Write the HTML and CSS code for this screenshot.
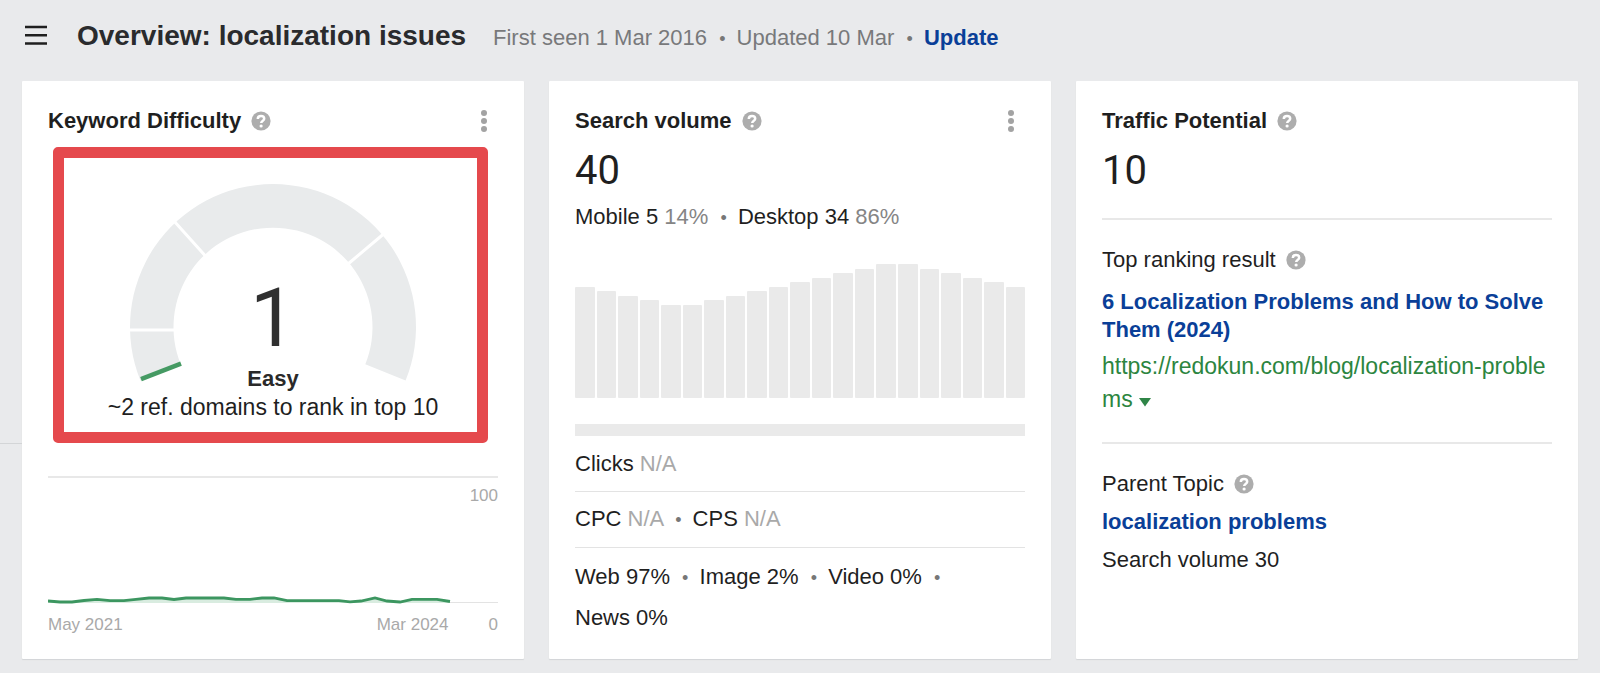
FILE: index.html
```html
<!DOCTYPE html>
<html lang="en">
<head>
<meta charset="utf-8">
<meta name="viewport" content="width=device-width, initial-scale=1">
<title>Overview: localization issues</title>
<link rel="stylesheet" href="styles.css">
</head>
<body>
<svg class="defs" aria-hidden="true">
  <symbol id="help" viewBox="0 0 20 20">
    <circle cx="10" cy="10" r="9.6" fill="#adadad"/>
    <path d="M6.800 7.900C6.800 6 8.200 5 10 5s3.200 1 3.200 2.700c0 2-3 2-3 4.400" fill="none" stroke="#fff" stroke-width="2.500"/>
    <circle cx="10.100" cy="15" r="1.600" fill="#fff"/>
  </symbol>
  <symbol id="kebab" viewBox="0 0 6 24">
    <g fill="#a3a3a3"><circle cx="3" cy="4" r="3"/><circle cx="3" cy="12" r="3"/><circle cx="3" cy="20" r="3"/></g>
  </symbol>
</svg>

<header class="topbar">
  <button class="icon-button" type="button" aria-label="Menu">
    <svg class="menu-icon" viewBox="0 0 22 20"><path d="M0 2h22M0 10.300h22M0 18.500h22" stroke="#1f1f1f" stroke-width="2.600"/></svg>
  </button>
  <h1 class="page-title">Overview: localization issues</h1>
  <p class="meta">First seen 1 Mar 2016 <span class="dot">•</span> Updated 10 Mar <span class="dot">•</span> <a class="link" href="#">Update</a></p>
</header>

<main class="cards">
  <section class="card">
    <div class="card-head">
      <h2 class="card-title">Keyword Difficulty</h2>
      <svg class="help"><use href="#help"/></svg>
      <button class="icon-button more" type="button" aria-label="More options"><svg class="kebab"><use href="#kebab"/></svg></button>
    </div>
    <div class="highlight">
      <div class="gauge">
        <svg class="gauge-arc" viewBox="0 0 286 200">
          <path d="M10.400 196.600A143 143 0 1 1 275.600 196.600L235.300 180.300A99.500 99.500 0 1 0 50.700 180.300Z" fill="#e9ebec"/>
          <path d="M-2 146H46M44 37L75 71.500M253 50.500L218 80" stroke="#fff" stroke-width="3" fill="none"/>
          <path d="M11 195.200L51 179.600" stroke="#459a63" stroke-width="4.500"/>
        </svg>
        <span class="gauge-value">1</span>
      </div>
      <strong class="gauge-label">Easy</strong>
      <span class="gauge-note">~2 ref. domains to rank in top 10</span>
    </div>
    <div class="history">
      <span class="axis-top">100</span>
      <svg class="history-chart" viewBox="0 0 450 14" preserveAspectRatio="none">
        <path d="M0 10.500H450" stroke="#e3e3e3"/>
        <path d="M0 9L12 10H24L36 8.500 49 7.300 62 8.700H76L88 7.300 101 6H114L126 7.500 138 6H176L188 7.300H202L214 6H226L239 8.700H291L302 9.800 313 9 327 6 339 9 352 10 364 7.300H389L402 9.500V11H0Z" fill="#d9ece0"/>
        <path d="M0 9L12 10H24L36 8.500 49 7.300 62 8.700H76L88 7.300 101 6H114L126 7.500 138 6H176L188 7.300H202L214 6H226L239 8.700H291L302 9.800 313 9 327 6 339 9 352 10 364 7.300H389L402 9.500" fill="none" stroke="#3c9660" stroke-width="2.800"/>
      </svg>
      <div class="axis-bottom"><span>May 2021</span><span class="axis-end">Mar 2024</span><span>0</span></div>
    </div>
  </section>

  <section class="card">
    <div class="card-head">
      <h2 class="card-title">Search volume</h2>
      <svg class="help"><use href="#help"/></svg>
      <button class="icon-button more" type="button" aria-label="More options"><svg class="kebab"><use href="#kebab"/></svg></button>
    </div>
    <p class="figure">40</p>
    <p>Mobile 5 <span class="share">14%</span> <span class="dot">•</span> Desktop 34 <span class="share">86%</span></p>
    <div class="bars">
      <i style="height:111px"></i><i style="height:107px"></i><i style="height:102px"></i><i style="height:98px"></i><i style="height:93px"></i><i style="height:93px"></i><i style="height:98px"></i><i style="height:102px"></i><i style="height:107px"></i><i style="height:111px"></i><i style="height:116px"></i><i style="height:120px"></i><i style="height:125px"></i><i style="height:129px"></i><i style="height:134px"></i><i style="height:134px"></i><i style="height:129px"></i><i style="height:125px"></i><i style="height:120px"></i><i style="height:116px"></i><i style="height:111px"></i>
    </div>
    <div class="clicks-bar"></div>
    <p class="row">Clicks <span class="na">N/A</span></p>
    <p class="row">CPC <span class="na">N/A</span> <span class="dot">•</span> CPS <span class="na">N/A</span></p>
    <p class="types">Web 97% <span class="dot">•</span> Image 2% <span class="dot">•</span> Video 0% <span class="dot">•</span> <span class="type">News 0%</span></p>
  </section>

  <section class="card">
    <div class="card-head">
      <h2 class="card-title">Traffic Potential</h2>
      <svg class="help"><use href="#help"/></svg>
    </div>
    <p class="figure">10</p>
    <div class="block">
      <div class="card-head"><h3 class="block-title">Top ranking result</h3><svg class="help"><use href="#help"/></svg></div>
      <a class="link result-title" href="#">6 Localization Problems and How to Solve Them (2024)</a>
      <p class="url"><a class="url-link" href="#">https://redokun.com/blog/localization-problems</a> <button class="icon-button" type="button" aria-label="URL options"><svg class="caret" viewBox="0 0 12 9"><path d="M0 0H12L6 8.500Z" fill="#2f8547"/></svg></button></p>
    </div>
    <div class="block">
      <div class="card-head"><h3 class="block-title">Parent Topic</h3><svg class="help"><use href="#help"/></svg></div>
      <a class="link topic" href="#">localization problems</a>
      <p>Search volume 30</p>
    </div>
  </section>
</main>
</body>
</html>
```
FILE: styles.css
```css
* { box-sizing: border-box; }
body {
  margin: 0;
  min-height: 100vh;
  display: flex;
  flex-direction: column;
  background: #e9eaec;
  color: #1f1f1f;
  font: 22px/28px "Liberation Sans", Arial, sans-serif;
}
h1, h2, h3, p { margin: 0; }
.defs { position: absolute; width: 0; height: 0; }
.icon-button { padding: 0; border: 0; background: none; cursor: pointer; }
.icon-button svg { display: block; }
.link { color: #0a3f98; font-weight: bold; text-decoration: none; }

.topbar {
  display: flex;
  align-items: baseline;
  padding: 20px 25px 0;
  height: 81px;
}
.menu-icon { width: 22px; height: 20px; }
.page-title { margin-left: 30px; font-size: 28px; line-height: 32px; color: #2a2b2d; }
.meta { margin-left: 27px; color: #78797b; }
.dot { margin: 0 5px 0 6px; font-size: 18px; color: #777; }

.cards {
  position: relative;
  flex: 1;
  display: grid;
  grid-template-columns: repeat(3, minmax(0, 1fr));
  gap: 25px;
  padding: 0 22px 14px;
}
.cards::before {
  content: "";
  position: absolute;
  left: 0;
  top: 362px;
  width: 22px;
  border-top: 1px solid #d3d5d7;
}
.card {
  padding: 26px 26px 16px;
  background: #fff;
  border-radius: 1px;
  box-shadow: 0 1px 1px #d2d4d7;
}
.card-head { display: flex; align-items: center; gap: 10px; }
.card-title, .block-title { font-size: 22px; line-height: 28px; }
.block-title { font-weight: normal; }
.help { width: 20px; height: 20px; }
.more { margin: 0 11px 0 auto; }
.kebab { width: 6px; height: 24px; }

.highlight {
  display: flex;
  flex-direction: column;
  align-items: center;
  margin: 12px 10px 0 5px;
  padding: 26px 0 11px 5px;
  border: 11px solid #e5494d;
  border-radius: 5px;
}
.gauge { position: relative; margin-bottom: -19px; }
.gauge-arc { display: block; width: 286px; height: 200px; }
.gauge-value {
  position: absolute;
  inset: 86px 0 auto;
  text-align: center;
  font: 82px/96px Roboto, sans-serif;
  color: #303030;
}
.gauge-label { position: relative; color: #2a2a2a; }
.gauge-note { font-size: 23px; }

.history {
  display: flex;
  flex-direction: column;
  margin-top: 33px;
  padding-top: 6px;
  border-top: 2px solid #e8e8e8;
  color: #a9a9a9;
  font-size: 17px;
  line-height: 24px;
}
.axis-top { align-self: flex-end; }
.history-chart { width: 100%; height: 14px; margin: 84px 0 7px; }
.axis-bottom { display: flex; }
.axis-end { margin: 0 40px 0 auto; }

.figure { margin: 12px 0 8px; font: 40px/48px Roboto, sans-serif; }
.share { color: #858585; }
.na { color: #a9a9a9; }
.bars {
  display: flex;
  align-items: flex-end;
  gap: 2px;
  height: 134px;
  margin-top: 32px;
}
.bars i { flex: 1; background: #eaeaea; border-radius: 1px; }
.clicks-bar { height: 12px; margin: 26px 0 1px; background: #eaeaea; }
.row { padding: 13px 0; border-bottom: 1px solid #e3e3e3; }
.types { padding-top: 9px; line-height: 39px; }
.type { white-space: nowrap; }

.block { margin-top: 23px; padding-top: 26px; border-top: 2px solid #e8e8e8; }
.block + .block { margin-top: 26px; }
.result-title { display: block; margin-top: 14px; }
.url { margin-top: 6px; line-height: 33px; }
.url-link { color: #2c8540; font-size: 23px; text-decoration: none; word-break: break-all; }
.caret { width: 12px; height: 9px; }
.topic { display: block; margin: 10px 0; }
```
